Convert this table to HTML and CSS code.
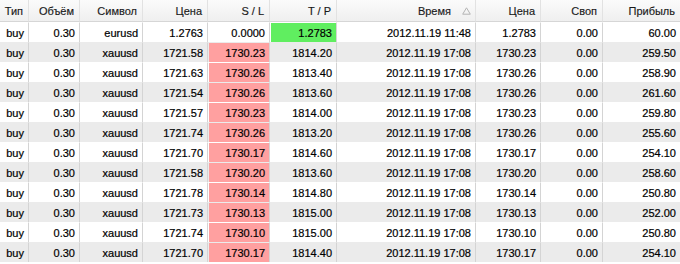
FILE: index.html
```html
<!DOCTYPE html>
<html lang="ru">
<head>
<meta charset="utf-8">
<link rel="stylesheet" href="styles.css">
</head>
<body>
<table class="grid">
  <colgroup>
    <col class="c-type"><col class="c-vol"><col class="c-sym"><col class="c-price"><col class="c-sl"><col class="c-tp"><col class="c-time"><col class="c-price2"><col class="c-swap"><col class="c-profit">
  </colgroup>
  <thead>
    <tr>
      <th>Тип</th><th>Объём</th><th>Символ</th><th>Цена</th><th>S / L</th><th>T / P</th>
      <th class="th-sorted"><span class="sorted">Время<svg class="sort" width="9" height="8" viewBox="0 0 9 8"><path d="M4.5 0.8 L8.3 7.2 L0.7 7.2 Z" fill="none" stroke="#b4b4b4" stroke-width="1"/></svg></span></th>
      <th>Цена</th><th>Своп</th><th>Прибыль</th>
    </tr>
  </thead>
  <tbody>
    <tr><td>buy</td><td>0.30</td><td>eurusd</td><td>1.2763</td><td>0.0000</td><td class="tp-hit">1.2783</td><td>2012.11.19 11:48</td><td>1.2783</td><td>0.00</td><td>60.00</td></tr>
    <tr><td>buy</td><td>0.30</td><td>xauusd</td><td>1721.58</td><td class="sl-hit">1730.23</td><td>1814.20</td><td>2012.11.19 17:08</td><td>1730.23</td><td>0.00</td><td>259.50</td></tr>
    <tr><td>buy</td><td>0.30</td><td>xauusd</td><td>1721.63</td><td class="sl-hit">1730.26</td><td>1813.40</td><td>2012.11.19 17:08</td><td>1730.26</td><td>0.00</td><td>258.90</td></tr>
    <tr><td>buy</td><td>0.30</td><td>xauusd</td><td>1721.54</td><td class="sl-hit">1730.26</td><td>1813.60</td><td>2012.11.19 17:08</td><td>1730.26</td><td>0.00</td><td>261.60</td></tr>
    <tr><td>buy</td><td>0.30</td><td>xauusd</td><td>1721.57</td><td class="sl-hit">1730.23</td><td>1814.00</td><td>2012.11.19 17:08</td><td>1730.23</td><td>0.00</td><td>259.80</td></tr>
    <tr><td>buy</td><td>0.30</td><td>xauusd</td><td>1721.74</td><td class="sl-hit">1730.26</td><td>1813.20</td><td>2012.11.19 17:08</td><td>1730.26</td><td>0.00</td><td>255.60</td></tr>
    <tr><td>buy</td><td>0.30</td><td>xauusd</td><td>1721.70</td><td class="sl-hit">1730.17</td><td>1814.60</td><td>2012.11.19 17:08</td><td>1730.17</td><td>0.00</td><td>254.10</td></tr>
    <tr><td>buy</td><td>0.30</td><td>xauusd</td><td>1721.58</td><td class="sl-hit">1730.20</td><td>1813.60</td><td>2012.11.19 17:08</td><td>1730.20</td><td>0.00</td><td>258.60</td></tr>
    <tr><td>buy</td><td>0.30</td><td>xauusd</td><td>1721.78</td><td class="sl-hit">1730.14</td><td>1814.80</td><td>2012.11.19 17:08</td><td>1730.14</td><td>0.00</td><td>250.80</td></tr>
    <tr><td>buy</td><td>0.30</td><td>xauusd</td><td>1721.73</td><td class="sl-hit">1730.13</td><td>1815.00</td><td>2012.11.19 17:08</td><td>1730.13</td><td>0.00</td><td>252.00</td></tr>
    <tr><td>buy</td><td>0.30</td><td>xauusd</td><td>1721.74</td><td class="sl-hit">1730.10</td><td>1815.00</td><td>2012.11.19 17:08</td><td>1730.10</td><td>0.00</td><td>250.80</td></tr>
    <tr><td>buy</td><td>0.30</td><td>xauusd</td><td>1721.70</td><td class="sl-hit">1730.17</td><td>1814.40</td><td>2012.11.19 17:08</td><td>1730.17</td><td>0.00</td><td>254.10</td></tr>
  </tbody>
</table>
</body>
</html>
```

FILE: styles.css
```css
html, body {
  margin: 0;
  padding: 0;
  background: #ffffff;
}

.grid {
  width: 680px;
  table-layout: fixed;
  border-collapse: separate;
  border-spacing: 0;
  font-family: "Liberation Sans", Arial, sans-serif;
  font-size: 11px;
  color: #000000;
  -webkit-text-stroke: 0.2px #000000;
}

.c-type { width: 29px; }
.c-vol { width: 51px; }
.c-sym { width: 63px; }
.c-price { width: 65px; }
.c-sl { width: 62px; }
.c-tp { width: 67px; }
.c-time { width: 139px; }
.c-price2 { width: 65px; }
.c-swap { width: 62px; }
.c-profit { width: 77px; }

.grid th {
  box-sizing: border-box;
  height: 22px;
  padding: 0 5px 0 0;
  text-align: right;
  font-weight: normal;
  color: #1a1a1a;
  -webkit-text-stroke: 0.15px #1a1a1a;
  background: linear-gradient(#fbfbfb, #efefef);
  border-right: 1px solid #e2e2e2;
  border-bottom: 1px solid #d6d6d6;
  white-space: nowrap;
  overflow: hidden;
  vertical-align: middle;
}

.grid th:last-child { border-right: none; }

.grid th.th-sorted { padding-right: 4px; }

.sorted {
  display: inline-flex;
  align-items: center;
  gap: 11px;
  -webkit-text-stroke: 0.15px #1a1a1a;
}

.sort { display: block; }

.grid td {
  box-sizing: border-box;
  height: 20px;
  padding: 0 4px 0 0;
  text-align: right;
  white-space: nowrap;
  overflow: hidden;
  border-top: 1px solid transparent;
  border-left: 1px solid transparent;
  border-right: 1px solid #d4d4d4;
  background-clip: padding-box;
  vertical-align: middle;
}

.grid td:last-child { border-right: none; }

.grid tbody tr:nth-child(odd) { background: #ffffff; }
.grid tbody tr:nth-child(even) { background: #ebebeb; }

.grid td.sl-hit { background-color: #ffa0a0; }
.grid td.tp-hit { background-color: #60ee60; }
```
